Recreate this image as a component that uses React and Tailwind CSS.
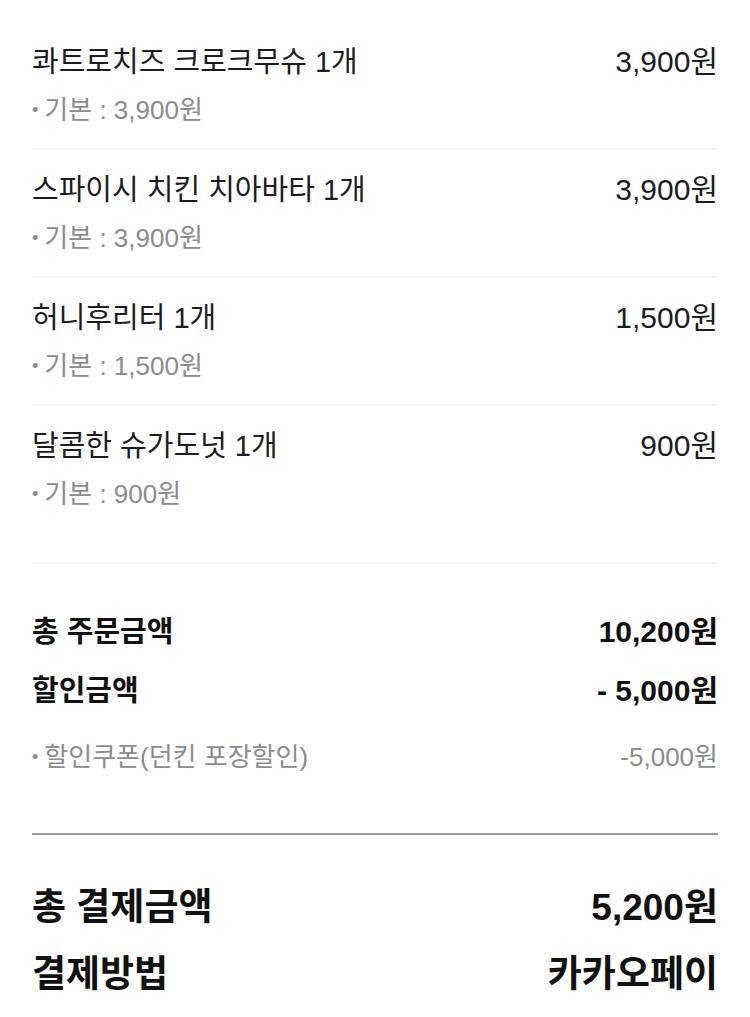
import React from 'react';

const items = [
  { name: '콰트로치즈 크로크무슈 1개', price: '3,900원', option: '기본 : 3,900원' },
  { name: '스파이시 치킨 치아바타 1개', price: '3,900원', option: '기본 : 3,900원' },
  { name: '허니후리터 1개', price: '1,500원', option: '기본 : 1,500원' },
  { name: '달콤한 슈가도넛 1개', price: '900원', option: '기본 : 900원' },
];

const OrderItem = ({ item, last }) => (
  <div className={`pt-[22px] border-b-2 border-[#f4f4f4] ${last ? 'pb-[52px]' : 'pb-[22px]'}`}>
    <div className="flex justify-between items-center h-9 text-[29px] leading-none text-[#1c1c1c]">
      <span>{item.name}</span>
      <span className="text-[30px]">{item.price}</span>
    </div>
    <div className="mt-[14px] h-8 flex items-center text-[26px] leading-none text-[#8c8c8c]">
      <span className="mr-[6px] text-[18px]">•</span>
      <span>{item.option}</span>
    </div>
  </div>
);

const App = () => {
  return (
    <div className="min-h-screen bg-white px-8 pt-[22px] font-['Liberation_Sans','Noto_Sans_CJK_KR',sans-serif]">
      {items.map((item, i) => (
        <OrderItem key={i} item={item} last={i === items.length - 1} />
      ))}

      <div className="pt-[50px] pb-[60px] border-b-2 border-[#9c9c9c]">
        <div className="flex justify-between items-center h-9 text-[29px] leading-none font-bold text-[#111]">
          <span>총 주문금액</span>
          <span className="text-[30px]">10,200원</span>
        </div>
        <div className="mt-[23px] flex justify-between items-center h-9 text-[29px] leading-none font-bold text-[#111]">
          <span>할인금액</span>
          <span className="text-[30px]">- 5,000원</span>
        </div>
        <div className="mt-[32px] flex justify-between items-center h-8 text-[26px] leading-none text-[#8c8c8c]">
          <span className="flex items-center">
            <span className="mr-[6px] text-[18px]">•</span>
            <span>할인쿠폰(던킨 포장할인)</span>
          </span>
          <span>-5,000원</span>
        </div>
      </div>

      <div className="pt-[50px]">
        <div className="flex justify-between items-center h-11 text-[37px] leading-none font-bold text-[#111]">
          <span>총 결제금액</span>
          <span>5,200원</span>
        </div>
        <div className="mt-[23px] flex justify-between items-center h-11 text-[37px] leading-none font-bold text-[#111]">
          <span>결제방법</span>
          <span>카카오페이</span>
        </div>
      </div>
    </div>
  );
};

export default App;
